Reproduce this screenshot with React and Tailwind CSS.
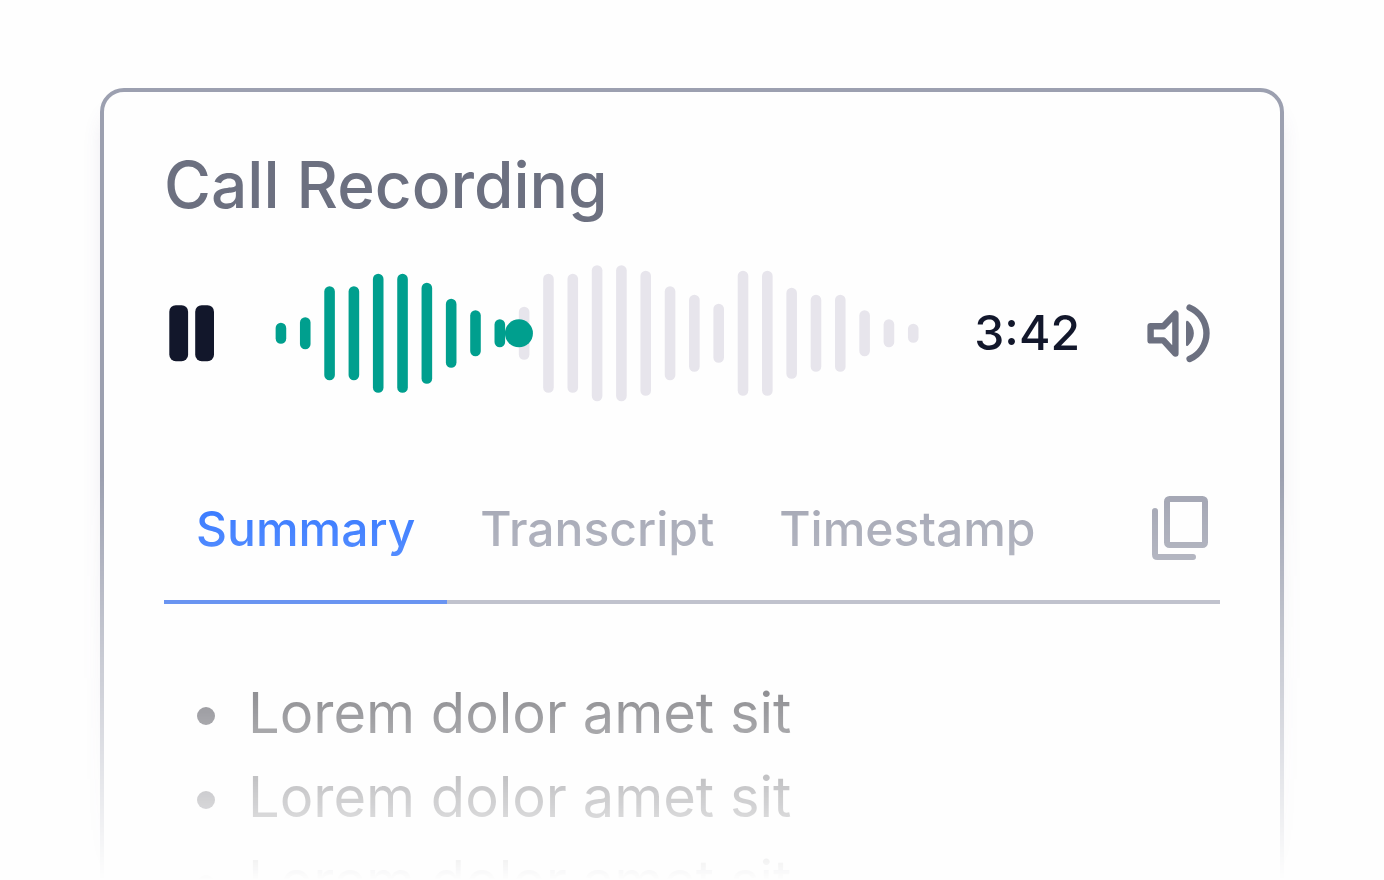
import React, { useState } from "react";

const DURATION = 222;

// bar heights of the call's waveform
const BARS = [
  21, 32, 94, 94, 119, 119, 101, 69, 46, 28, 53, 119, 119, 136, 136, 125, 94,
  77, 59, 125, 125, 91, 77, 77, 46, 28, 19,
];
const BAR_WIDTH = 10.6;
const BAR_STEP = 24.32;
const WAVE_WIDTH = 643;
const WAVE_MIDDLE = 69.3;

const TABS = ["Summary", "Transcript", "Timestamp"];

const NOTES = [
  "Lorem dolor amet sit",
  "Lorem dolor amet sit",
  "Lorem dolor amet sit",
];

const formatTime = (seconds) =>
  `${Math.floor(seconds / 60)}:${String(seconds % 60).padStart(2, "0")}`;

const PauseIcon = () => (
  <svg viewBox="0 0 56 56" className="size-14 overflow-visible fill-[#12172b]">
    <rect x="5.3" y="0.2" width="18.8" height="56" rx="6.5" />
    <rect x="31.2" y="0.2" width="18.8" height="56" rx="6.5" />
  </svg>
);

const VolumeIcon = () => (
  <svg
    viewBox="0 0 72 72"
    className="size-[72px]"
    fill="none"
    stroke="currentColor"
    strokeWidth="6.4"
    strokeLinecap="round"
    strokeLinejoin="round"
  >
    <path d="M6.6 29.2H19.4L31.4 16.7V56.5L19.4 43.4H6.6Z" />
    <path d="M45.6 10.6A28 28 0 0 1 45.6 62" />
    <path
      d="M42 25.4C42 23.6 43.4 23.2 44.6 24.6C51.6 31.6 51.6 41 44.6 48C43.4 49.6 42 49.2 42 47.4Z"
      fill="currentColor"
      stroke="none"
    />
  </svg>
);

const CopyIcon = () => (
  <svg
    viewBox="0 0 72 72"
    className="size-[72px]"
    fill="none"
    stroke="currentColor"
    strokeWidth="6"
    strokeLinecap="round"
    strokeLinejoin="round"
  >
    <rect x="23" y="7" width="38" height="46" rx="2.5" />
    <path d="M11 19V62.5Q11 65 13.5 65H49" />
  </svg>
);

const Waveform = ({ position, onSeek }) => {
  const knob = (position / DURATION) * WAVE_WIDTH;

  return (
    <div className="relative min-w-0 flex-1">
      <svg
        viewBox="0 0 643 138"
        className="block h-[138px] w-full overflow-visible"
      >
        {BARS.map((height, index) => {
          const x = index * BAR_STEP;
          const played = x + BAR_WIDTH / 2 < knob;
          return (
            <rect
              key={index}
              x={x}
              y={WAVE_MIDDLE - height / 2}
              width={BAR_WIDTH}
              height={height}
              rx={BAR_WIDTH / 2}
              className={played ? "fill-[#009f8e]" : "fill-[#e7e5ec]"}
            />
          );
        })}
        <circle cx={knob} cy={WAVE_MIDDLE} r="14" className="fill-[#009f8e]" />
      </svg>
      {/* invisible slider on top of the drawing does the seeking */}
      <input
        type="range"
        aria-label="Playback position"
        min={0}
        max={DURATION}
        value={position}
        onChange={(e) => onSeek(Number(e.target.value))}
        className="absolute inset-0 size-full cursor-pointer opacity-0"
      />
    </div>
  );
};

const App = () => {
  const [position, setPosition] = useState(84);
  const [tab, setTab] = useState("Summary");

  return (
    <div className="h-screen overflow-hidden bg-[#fefefe] font-['Inter',sans-serif]">
      {/* everything fades out towards the bottom edge */}
      <main className="h-full overflow-hidden px-[100px] pt-[88px] mask-b-from-54% mask-b-to-100%">
        <section className="rounded-3xl border-4 border-[#9ca0b0] bg-[#fefefe] px-[60px] pt-[53px] pb-16 shadow-[0_20px_24px_-8px_rgba(90,70,130,0.2)]">
          <h1 className="text-[64px] leading-[80px] font-medium text-[#6c7080]">
            Call Recording
          </h1>

          <div className="mt-[39px] flex items-center pr-1">
            <button type="button" aria-label="Pause" className="mr-[55px]">
              <PauseIcon />
            </button>
            <Waveform position={position} onSeek={setPosition} />
            <span className="ml-[55px] text-5xl leading-[60px] font-medium text-[#12172b]">
              {formatTime(DURATION)}
            </span>
            <button
              type="button"
              aria-label="Volume"
              className="ml-16 text-[#6c7080]"
            >
              <VolumeIcon />
            </button>
          </div>

          <div className="mt-[58px] flex items-start border-b-4 border-[#a3a6b6]">
            <div role="tablist" className="-mb-1 flex gap-px">
              {TABS.map((name) => (
                <button
                  key={name}
                  type="button"
                  role="tab"
                  aria-selected={tab === name}
                  onClick={() => setTab(name)}
                  className={`border-b-4 px-8 pt-[33px] pb-[35px] text-5xl leading-[72px] font-medium ${
                    tab === name
                      ? "border-[#2563eb] text-[#2970ff]"
                      : "border-transparent text-[#a0a3b1]"
                  }`}
                >
                  {name}
                </button>
              ))}
            </div>
            <button
              type="button"
              aria-label="Copy"
              className="mt-8 mr-1 ml-auto text-[#a0a3b1]"
            >
              <CopyIcon />
            </button>
          </div>

          <ul className="mt-[67px] pl-[33px] text-[56px] leading-[84px] text-[#12121a]">
            {NOTES.map((note, index) => (
              <li
                key={index}
                className="flex items-center gap-[33px] before:mt-1.5 before:size-[18px] before:rounded-full before:bg-[#1e1e2a]"
              >
                {note}
              </li>
            ))}
          </ul>
        </section>
      </main>
    </div>
  );
};

export default App;
